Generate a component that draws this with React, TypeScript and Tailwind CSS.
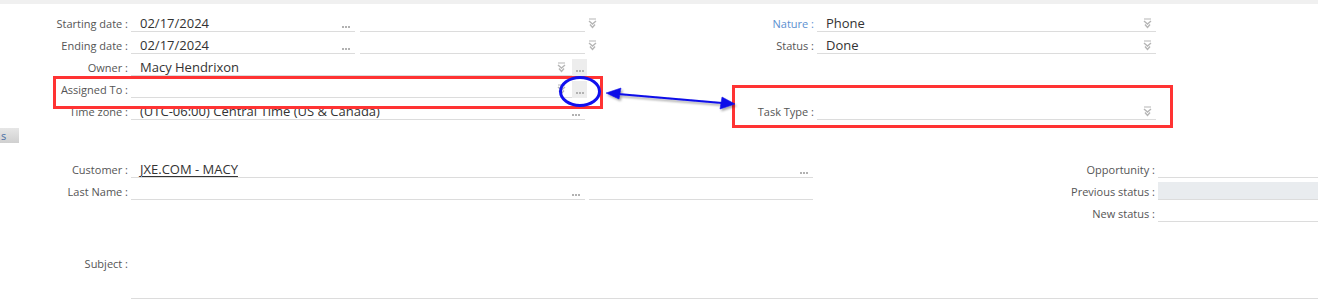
import React from 'react';

const font = { fontFamily: '"Open Sans", "Noto Sans", sans-serif' };

function DropIcon() {
  return (
    <svg width="9" height="11" viewBox="0 0 9 11" className="shrink-0">
      <path d="M1 1 L8 1" stroke="#b5b5b5" strokeWidth="1" fill="none" />
      <path d="M1 3 L4.5 6 L8 3" stroke="#b5b5b5" strokeWidth="1.4" fill="none" />
      <path d="M2 6.5 L4.5 9.5 L7 6.5" stroke="#b5b5b5" strokeWidth="1.4" fill="none" />
    </svg>
  );
}

function Dots({ boxed }: { boxed?: boolean }) {
  return (
    <span
      className={
        'flex h-[17px] w-[15px] shrink-0 items-end justify-center gap-[1px] pb-[4px] ' +
        (boxed ? 'self-end bg-[#ededed]' : '')
      }
    >
      <span className="h-[2px] w-[2px] bg-[#b2b2b2]" />
      <span className="h-[2px] w-[2px] bg-[#b2b2b2]" />
      <span className="h-[2px] w-[2px] bg-[#b2b2b2]" />
    </span>
  );
}

function Label({ text, w, blue }: { text: string; w: string; blue?: boolean }) {
  return (
    <span
      className={`${w} shrink-0 pr-[3px] pt-[6px] text-right text-[11px] ${blue ? 'text-[#5b8fd0]' : 'text-[#555]'}`}
    >
      {text}
    </span>
  );
}

function Line({ w, children }: { w: string; children?: React.ReactNode }) {
  return (
    <div
      className={`${w} flex h-[22px] shrink-0 items-center border-b-[1.5px] border-[#dcdcdc] pl-[9px] pr-[2px] pt-[6px] text-[13px] text-[#333]`}
    >
      {children}
    </div>
  );
}

export default function App() {
  return (
    <div className="relative h-[304px] w-[1318px] overflow-hidden bg-white" style={font}>
      <div className="h-[4px] bg-[#f0f0f0]" />

      {/* top section */}
      <div className="flex pt-[6px]">
        <div className="flex w-[730px] flex-col">
          <div className="flex h-[22px] items-center">
            <Label text="Starting date :" w="w-[131px]" />
            <Line w="w-[224px]">
              <span className="flex-1">02/17/2024</span>
              <Dots />
            </Line>
            <div className="w-[5px]" />
            <Line w="w-[225px]">
              <span className="flex-1" />
            </Line>
            <div className="pl-[3px] pt-[5px]">
              <DropIcon />
            </div>
          </div>
          <div className="flex h-[22px] items-center">
            <Label text="Ending date :" w="w-[131px]" />
            <Line w="w-[224px]">
              <span className="flex-1">02/17/2024</span>
              <Dots />
            </Line>
            <div className="w-[5px]" />
            <Line w="w-[225px]">
              <span className="flex-1" />
            </Line>
            <div className="pl-[3px] pt-[5px]">
              <DropIcon />
            </div>
          </div>
          <div className="flex h-[22px] items-center">
            <Label text="Owner :" w="w-[131px]" />
            <Line w="w-[441px]">
              <span className="flex-1">Macy Hendrixon</span>
              <span className="pr-[4px]">
                <DropIcon />
              </span>
            </Line>
            <Dots boxed />
          </div>
          <div className="flex h-[22px] items-center">
            <Label text="Assigned To :" w="w-[131px]" />
            <Line w="w-[441px]">
              <span className="flex-1" />
              <span className="pr-[4px]">
                <DropIcon />
              </span>
            </Line>
            <Dots boxed />
          </div>
          <div className="flex h-[22px] items-center">
            <Label text="Time zone :" w="w-[131px]" />
            <Line w="w-[454px]">
              <span className="flex-1">(UTC-06:00) Central Time (US &amp; Canada)</span>
              <Dots />
            </Line>
          </div>
        </div>

        <div className="flex flex-col">
          <div className="flex h-[22px] items-center">
            <Label text="Nature :" w="w-[87px]" blue />
            <Line w="w-[339px]">
              <span className="flex-1">Phone</span>
              <span className="pr-[2px]">
                <DropIcon />
              </span>
            </Line>
          </div>
          <div className="flex h-[22px] items-center">
            <Label text="Status :" w="w-[87px]" />
            <Line w="w-[339px]">
              <span className="flex-1">Done</span>
              <span className="pr-[2px]">
                <DropIcon />
              </span>
            </Line>
          </div>
          <div className="h-[44px]" />
          <div className="flex h-[22px] items-center">
            <Label text="Task Type :" w="w-[87px]" />
            <Line w="w-[339px]">
              <span className="flex-1" />
              <span className="pr-[2px]">
                <DropIcon />
              </span>
            </Line>
          </div>
        </div>
      </div>

      {/* side tab */}
      <div className="mt-[8px] flex h-[15px] w-[19px] items-center bg-gradient-to-b from-[#e6e6e6] to-[#d0d0d0] pl-[1px] text-[11px] leading-none text-[#4a6fa5]">
        s
      </div>

      {/* lower section */}
      <div className="mt-[13px] flex">
        <div className="flex w-[1029px] flex-col">
          <div className="flex h-[22px] items-center">
            <Label text="Customer :" w="w-[131px]" />
            <Line w="w-[682px]">
              <span className="flex-1 text-[#333] underline underline-offset-2">JXE.COM - MACY</span>
              <Dots />
            </Line>
          </div>
          <div className="flex h-[22px] items-center">
            <Label text="Last Name :" w="w-[131px]" />
            <Line w="w-[454px]">
              <span className="flex-1" />
              <Dots />
            </Line>
            <div className="w-[4px]" />
            <Line w="w-[224px]" />
          </div>
        </div>
        <div className="flex flex-col">
          <div className="flex h-[22px] items-center">
            <Label text="Opportunity :" w="w-[131px]" />
            <Line w="w-[160px]" />
          </div>
          <div className="flex h-[22px] items-end">
            <Label text="Previous status :" w="w-[131px] self-center" />
            <div className="h-[18px] w-[160px] border-b-[1.5px] border-[#dcdcdc] bg-[#e9ecef]" />
          </div>
          <div className="flex h-[22px] items-center">
            <Label text="New status :" w="w-[131px]" />
            <Line w="w-[160px]" />
          </div>
        </div>
      </div>

      <div className="mt-[22px] flex">
        <div className="flex w-[131px] pt-[6px]">
          <Label text="Subject :" w="w-[131px]" />
        </div>
        <div className="h-[55px] w-[1187px] border-b-[1.5px] border-[#dcdcdc]" />
      </div>

      {/* annotations */}
      <div className="absolute left-[53px] top-[76px] h-[33px] w-[550px] border-[3px] border-[#ff3333]" />
      <div className="absolute left-[732px] top-[85px] h-[43px] w-[441px] border-[3px] border-[#ff3333]" />
      <div className="absolute left-[559px] top-[76px] h-[31px] w-[42px] rounded-[50%] border-[3px] border-[#1010ee]" />
      <svg className="absolute left-0 top-0" width="1318" height="304" viewBox="0 0 1318 304">
        <defs>
          <filter id="sh" x="-10%" y="-50%" width="120%" height="200%">
            <feDropShadow dx="1.5" dy="2" stdDeviation="1.2" floodColor="#000" floodOpacity="0.35" />
          </filter>
        </defs>
        <g filter="url(#sh)" fill="#0a0ae8" stroke="#0a0ae8">
          <line x1="618" y1="94" x2="722" y2="103" strokeWidth="2" />
          <polygon points="606,93 621,88 619,99" strokeWidth="0.5" />
          <polygon points="735,104 720,109 722,97" strokeWidth="0.5" />
        </g>
      </svg>
    </div>
  );
}
